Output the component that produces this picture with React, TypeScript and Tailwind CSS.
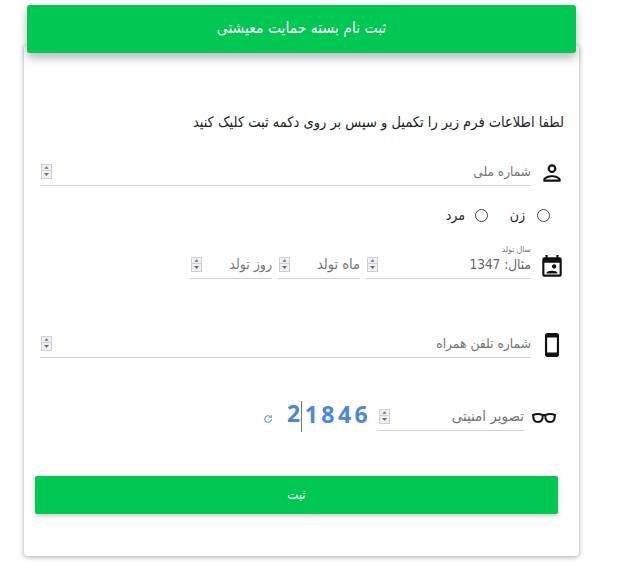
import React from "react";

const Spin = () => (
  <span className="flex flex-col w-[11px] h-[15px] border border-[#cfcfdc] bg-[#f0f0f5] shrink-0">
    <svg viewBox="0 0 9 6" className="w-[9px] h-[6px] border-b border-[#cfcfdc]"><path d="M4.5 1.5 2 4.5h5z" fill="#6b6b7a" /></svg>
    <svg viewBox="0 0 9 6" className="w-[9px] h-[7px]"><path d="M4.5 4.5 2 1.5h5z" fill="#6b6b7a" /></svg>
  </span>
);

const Field = ({ text, className = "" }: { text: string; className?: string }) => (
  <div className={"flex items-start justify-between border-b border-[#d2d2d2] h-[29px] " + className}>
    <span className="leading-[27px] pt-[1px]">{text}</span>
    <span className="pt-[7px] pl-[1px]"><Spin /></span>
  </div>
);

export default function App() {
  return (
    <div dir="rtl" className="relative w-[640px] h-[562px] overflow-hidden bg-white pt-[5px] [font-family:'DejaVu_Sans',sans-serif] [font-stretch:condensed] text-[#212121]">
      <div className="relative z-10 mr-[64px] ml-[27px] w-[549px] h-[48px] rounded-[3px] bg-[#00c853] text-white text-[15.5px] flex items-center justify-center shadow-[0_5px_10px_rgba(0,0,0,0.28)]">
        ثبت نام بسته حمایت معیشتی
      </div>
      <div className="ml-[24px] mr-[61px] w-[555px] h-[511px] -mt-[8px] rounded-[4px] bg-white shadow-[0_1px_5px_rgba(0,0,0,0.35)] flex flex-col pt-[67px] pr-[15px] pl-[16px]">
        <p className="text-[14.5px] leading-5 text-[#222] h-[20px]">لطفا اطلاعات فرم زیر را تکمیل و سپس بر روی دکمه ثبت کلیک کنید</p>

        <div className="flex items-center mt-[25px] h-[29px]">
          <svg viewBox="0 0 24 24" className="w-[26px] h-[26px] -mr-px shrink-0 mt-[3px]" fill="#111"><path d="M12 6a2 2 0 1 1 0 4 2 2 0 0 1 0-4m0 10c2.700 0 5.800 1.290 6 2H6c.23-.72 3.310-2 6-2M12 4a4 4 0 1 0 0 8 4 4 0 0 0 0-8m0 10c-2.670 0-8 1.340-8 4v2h16v-2c0-2.660-5.330-4-8-4" /></svg>
          <Field text="شماره ملی" className="mr-[8px] w-[491px] text-[13.5px] text-[#757575]" />
        </div>

        <div className="flex items-center h-[20px] mt-[19px] text-[14px] text-[#222]">
          <span className="w-[13px] h-[13px] rounded-full border-[1.5px] border-[#444] mr-[14px]" />
          <span className="mr-[12px] w-[37px]">زن</span>
          <span className="w-[13px] h-[13px] rounded-full border-[1.5px] border-[#444]" />
          <span className="mr-[10px]">مرد</span>
        </div>

        <div className="flex items-center mt-[25px] h-[29px]">
          <svg viewBox="0 0 24 24" className="w-[26px] h-[26px] -mr-px shrink-0 mt-[4px]" fill="#111"><path d="M19 3h-1V1h-2v2H8V1H6v2H5a2 2 0 0 0-2 2v14a2 2 0 0 0 2 2h14a2 2 0 0 0 2-2V5a2 2 0 0 0-2-2m0 16H5V8h14zM12 11.500a2 2 0 1 1 0 .01zM7 17.500c0-1.300 3-2 5-2s5 .7 5 2V18H7z" /></svg>
          <div className="mr-[8px] flex gap-[6px] w-[341px]">
            <div className="relative w-[165px]">
              <span className="absolute -top-[6px] right-0 text-[8.5px] text-[#777] leading-[10px]">سال تولد</span>
              <Field text="مثال: 1347" className="text-[13.5px] text-[#666]" />
            </div>
            <Field text="ماه تولد" className="w-[82px] text-[14.5px] text-[#757575]" />
            <Field text="روز تولد" className="w-[82px] text-[14px] text-[#757575]" />
          </div>
        </div>

        <div className="flex items-center mt-[50px] h-[29px]">
          <svg viewBox="0 0 24 24" className="w-[26px] h-[26px] -mr-px shrink-0 mt-[3px]" fill="#111"><path d="M16 1H8a2.500 2.500 0 0 0-2.500 2.500v17A2.500 2.500 0 0 0 8 23h8a2.500 2.500 0 0 0 2.500-2.500v-17A2.500 2.500 0 0 0 16 1m.500 18h-9V5h9z" /></svg>
          <Field text="شماره تلفن همراه" className="mr-[8px] w-[491px] text-[13.7px] text-[#757575]" />
        </div>

        <div className="flex items-center mt-[44px] h-[29px]">
          <svg viewBox="0 0 24 12" className="w-[24px] h-[12px] mr-[8px] shrink-0 mt-[3px]" fill="none" stroke="#111" strokeWidth="2"><path d="M1 3c4-1.500 7-1 9.500 0 .5 3 0 7-4.500 7S1.500 7 1 3zM23 3c-4-1.500-7-1-9.500 0-.5 3 0 7 4.500 7S22.500 7 23 3zM10 3.500c1.300-.7 2.700-.7 4 0" /></svg>
          <Field text="تصویر امنیتی" className="mr-[8px] w-[146px] text-[15px] text-[#757575]" />
          <div dir="ltr" className="relative mr-[8px] w-[84px] h-[31px] text-[23px] font-bold text-[#4a86e0] tracking-[3.500px] leading-[31px] [font-family:'Open_Sans',sans-serif] [font-stretch:normal] flex items-center">
            <span className="-mt-[6px] ml-[1px]">2</span>
            <span className="absolute left-[15px] top-0 w-px h-[31px] bg-[#777]" />
            <span className="ml-[1px] -mt-[4px]">1846</span>
          </div>
          <svg viewBox="0 0 24 24" className="w-[10px] h-[10px] mr-[13px] mt-[5px]" fill="none" stroke="#5b9bd5" strokeWidth="2.500"><path d="M20 12a8 8 0 1 1-2.500-5.800M20 3v5h-5" /></svg>
        </div>

        <button className="mt-[45px] -ml-[5px] mr-[6px] h-[38px] rounded-[2px] bg-[#00c853] text-white text-[13px] shadow-[0_2px_4px_rgba(0,0,0,0.22)]">ثبت</button>
      </div>
    </div>
  );
}
